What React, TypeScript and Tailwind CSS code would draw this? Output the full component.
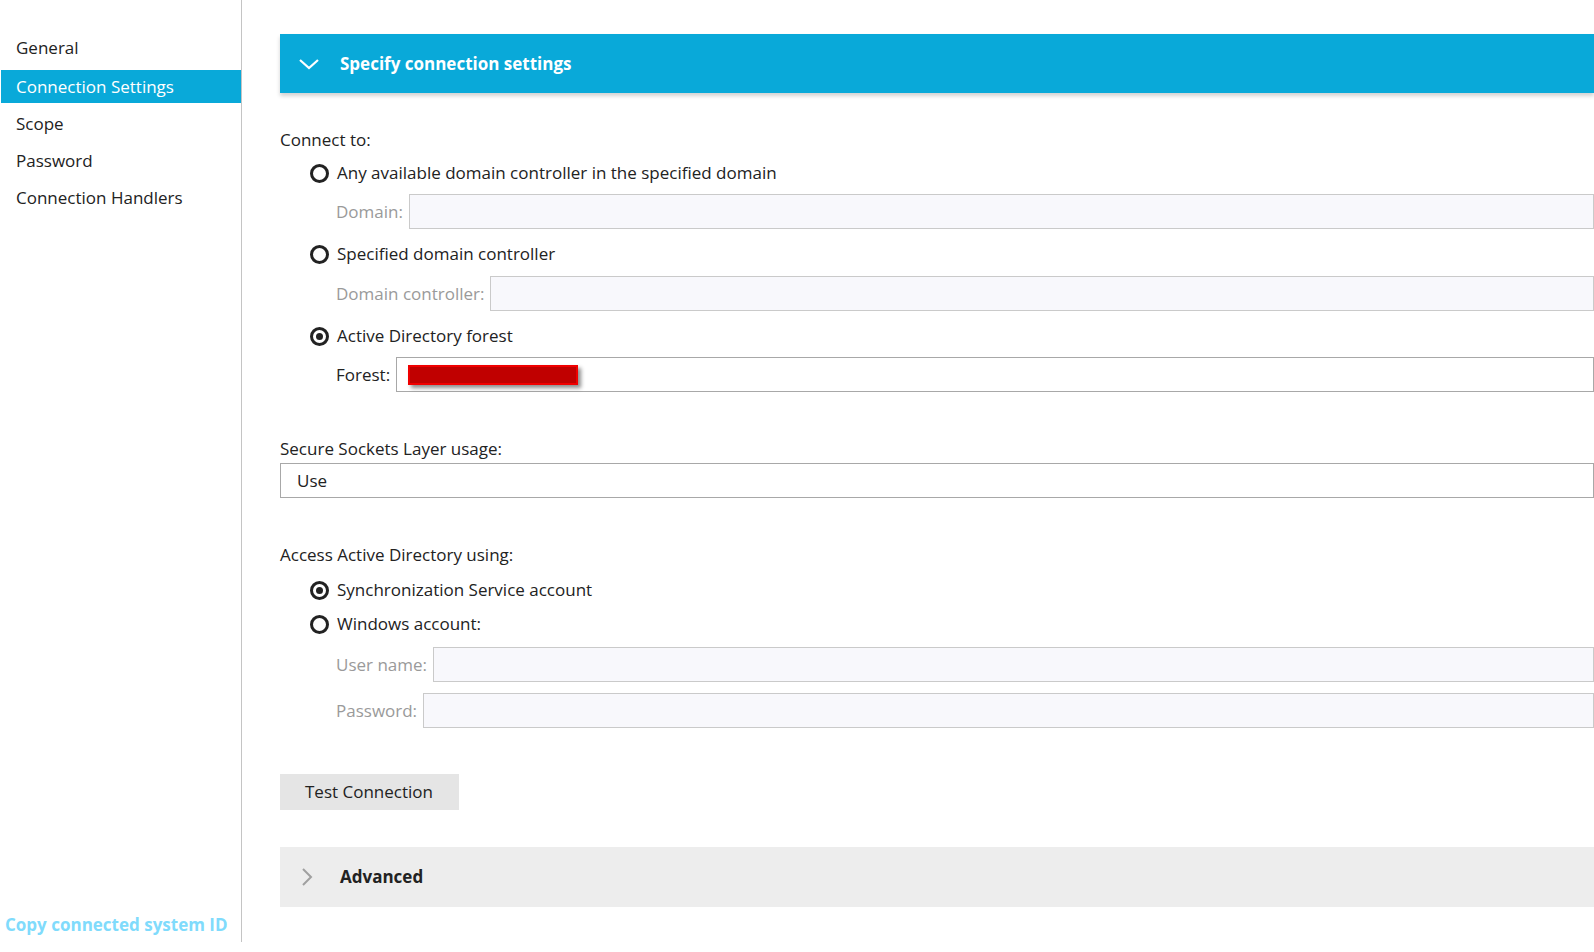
import React from "react";

const FONT = "font-['Open_Sans','Noto_Sans',sans-serif]";

const navItems = ["General", "Connection Settings", "Scope", "Password", "Connection Handlers"];

function Radio({ checked, label, className = "" }: { checked?: boolean; label: string; className?: string }) {
  return (
    <div className={`flex h-6 items-center pl-[30px] ${className}`}>
      <span className="flex h-[19px] w-[19px] items-center justify-center rounded-full border-[3px] border-[#222]">
        {checked && <span className="h-[7px] w-[7px] rounded-full bg-[#222]" />}
      </span>
      <span className="ml-[8px] text-[17px] text-[#222]">{label}</span>
    </div>
  );
}

function Field({ label, className = "", enabled, children }: { label: string; className?: string; enabled?: boolean; children?: React.ReactNode }) {
  return (
    <div className={`flex h-[35px] items-center pl-[56px] ${className}`}>
      <span className={`mr-[6px] text-[17px] ${enabled ? "text-[#222]" : "text-[#9a9a9a]"}`}>{label}</span>
      <div
        className={`flex h-[35px] flex-1 items-center border ${
          enabled ? "border-[#a8a8a8] bg-white" : "border-[#cacaca] bg-[#f8f8fc]"
        }`}
      >
        {children}
      </div>
    </div>
  );
}

export default function App() {
  return (
    <div className={`flex h-[952px] w-full overflow-hidden bg-white ${FONT}`}>
      <aside className="flex h-[942px] w-[242px] shrink-0 flex-col border-r border-[#c4c4c4]">
        <nav className="mt-[31px] flex flex-col">
          {navItems.map((item, i) => (
            <div
              key={item}
              className={`ml-px flex h-[33px] items-center pl-[15px] text-[17px] ${i === 0 ? "" : i === 1 ? "mt-[6px]" : "mt-[4px]"} ${
                item === "Connection Settings" ? "bg-[#09a9d9] text-white" : "text-[#222]"
              }`}
            >
              {item}
            </div>
          ))}
        </nav>
        <div className="mt-auto mb-[5px] pl-[5px] text-[17px] font-bold text-[#80dbfc]">Copy connected system ID</div>
      </aside>

      <main className="flex flex-1 flex-col pl-[38px]">
        <div className="mt-[34px] flex h-[59px] items-center bg-[#09a9d9] shadow-[0_3px_4px_rgba(0,0,0,0.18)]">
          <svg width="22" height="12" viewBox="0 0 22 12" className="ml-[18px]">
            <path d="M2 2 L11 10 L20 2" fill="none" stroke="white" strokeWidth="2.2" />
          </svg>
          <span className="ml-[20px] text-[17px] font-bold text-white">Specify connection settings</span>
        </div>

        <div className="mt-[35px] flex h-6 items-center text-[17px] text-[#222]">Connect to:</div>
        <Radio label="Any available domain controller in the specified domain" className="mt-[9px]" />
        <Field label="Domain:" className="mt-[9px]" />
        <Radio label="Specified domain controller" className="mt-[13px]" />
        <Field label="Domain controller:" className="mt-[10px]" />
        <Radio checked label="Active Directory forest" className="mt-[13px]" />
        <Field label="Forest:" enabled className="mt-[9px]">
          <span className="ml-[11px] h-[20px] w-[170px] border-2 border-[#f00000] bg-[#c00000] shadow-[3px_3px_4px_rgba(0,0,0,0.45)]" />
        </Field>

        <div className="mt-[45px] flex h-6 items-center text-[17px] text-[#222]">Secure Sockets Layer usage:</div>
        <div className="mt-[2px] flex h-[35px] items-center border border-[#a8a8a8] pl-[16px] text-[17px] text-[#222]">
          Use
        </div>

        <div className="mt-[45px] flex h-6 items-center text-[17px] text-[#222]">Access Active Directory using:</div>
        <Radio checked label="Synchronization Service account" className="mt-[11px]" />
        <Radio label="Windows account:" className="mt-[10px]" />
        <Field label="User name:" className="mt-[11px]" />
        <Field label="Password:" className="mt-[11px]" />

        <div className="mt-[46px] flex">
          <button className="h-[36px] w-[179px] bg-[#e5e5e5] pl-[25px] text-left text-[17px] text-[#222]">
            Test Connection
          </button>
        </div>

        <div className="mt-[37px] flex h-[60px] items-center bg-[#ededed]">
          <svg width="12" height="20" viewBox="0 0 12 20" className="ml-[21px]">
            <path d="M2 2 L10 10 L2 18" fill="none" stroke="#a0a0a0" strokeWidth="2" />
          </svg>
          <span className="ml-[27px] text-[17px] font-bold text-[#222]">Advanced</span>
        </div>
      </main>
    </div>
  );
}
